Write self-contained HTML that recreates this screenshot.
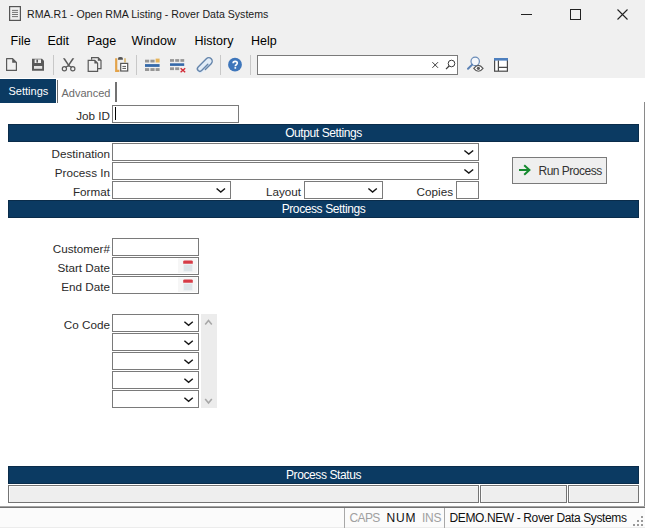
<!DOCTYPE html>
<html><head><meta charset="utf-8">
<style>
*{box-sizing:border-box;margin:0;padding:0}
html,body{width:645px;height:528px;overflow:hidden;background:#f0f0f0;font-family:"Liberation Sans",sans-serif;color:#000}
.a{position:absolute}
.t{position:absolute;white-space:nowrap;line-height:1}
#title{left:27px;top:9.2px;font-size:10.6px;color:#1a1a1a}
.menu{top:35px;font-size:12.5px;color:#000}
.sep{position:absolute;width:1px;background:#c8c8c8;top:55px;height:20px}
.hdr{position:absolute;left:8px;width:631px;height:18px;background:#0b3a62;border:1px solid #0a2c4a;color:#fff;font-size:12px;letter-spacing:-0.4px;text-align:center;line-height:16px}
.lbl{position:absolute;font-size:11.7px;color:#2a2a2a;text-align:right;line-height:1;white-space:nowrap}
.box{position:absolute;background:#fff;border:1px solid #7a7a7a;height:18px}
.chev{position:absolute;width:9px;height:5px}
</style></head><body>
<!-- title bar -->
<svg class="a" style="left:0;top:0" width="30" height="30">
<rect x="9.6" y="6.6" width="10.8" height="13.8" fill="none" stroke="#555" stroke-width="1.2"/>
<path d="M12 10.4h6M12 12.4h6M12 14.5h6M12 16.6h6" stroke="#666" stroke-width="0.9"/>
</svg>
<div class="t" id="title">RMA.R1 - Open RMA Listing - Rover Data Systems</div>
<svg class="a" style="left:521px;top:14px" width="11" height="1"><rect width="11" height="1" fill="#222"/></svg>
<svg class="a" style="left:570px;top:9px" width="11" height="11"><rect x="0.5" y="0.5" width="10" height="10" fill="none" stroke="#222"/></svg>
<svg class="a" style="left:617px;top:9px" width="11" height="11"><path d="M0.5 0.5L10.5 10.5M10.5 0.5L0.5 10.5" stroke="#222" stroke-width="1.1"/></svg>

<!-- menu -->
<div class="t menu" style="left:10.5px">File</div>
<div class="t menu" style="left:47.5px">Edit</div>
<div class="t menu" style="left:87px">Page</div>
<div class="t menu" style="left:131.5px">Window</div>
<div class="t menu" style="left:194.5px">History</div>
<div class="t menu" style="left:251px">Help</div>

<!-- toolbar -->
<svg class="a" style="left:0;top:52px" width="520" height="26" viewBox="0 52 520 26">
 <!-- new doc -->
 <path d="M6.6 58.6H12.6L16.4 62.4V70.4H6.6Z" fill="none" stroke="#5a5a5a" stroke-width="1.2" stroke-linejoin="round"/>
 <path d="M12.2 58.4L16.6 62.8H12.2Z" fill="#5a5a5a"/>
 <!-- save -->
 <path d="M32 58.8H42L44 60.8V70.8H32Z" fill="#5a5a5a"/>
 <rect x="34.6" y="59.4" width="6.4" height="3.6" fill="#f0f0f0"/>
 <rect x="36.4" y="59.6" width="1.6" height="3" fill="#5a5a5a"/>
 <rect x="34" y="66" width="8.2" height="2.8" fill="#e6e6e6"/>
 <!-- scissors -->
 <path d="M62.9 58.2L64.9 58.2L69.6 65.4L68.6 66.4Z" fill="#5a5a5a"/>
 <path d="M74.3 58.2L72.3 58.2L67.6 65.4L68.6 66.4Z" fill="#5a5a5a"/>
 <path d="M68.6 65.6L65.6 67.2M68.6 65.6L71.6 67.2" stroke="#5a5a5a" stroke-width="1.2"/>
 <circle cx="64.4" cy="68.8" r="2.1" fill="none" stroke="#5a5a5a" stroke-width="1.2"/>
 <circle cx="72.8" cy="68.8" r="2.1" fill="none" stroke="#5a5a5a" stroke-width="1.2"/>
 <!-- copy -->
 <path d="M91.6 59.8V57.6H98.2L101 60.4V68.6H98" fill="none" stroke="#5a5a5a" stroke-width="1.2"/>
 <path d="M97.8 57.2L101.4 60.8H97.8Z" fill="#5a5a5a"/>
 <path d="M88.2 60.4H94.8L97.6 63.2V71.4H88.2Z" fill="#f0f0f0" stroke="#5a5a5a" stroke-width="1.2"/>
 <path d="M94.4 60L98 63.6H94.4Z" fill="#5a5a5a"/>
 <!-- paste -->
 <path d="M116.2 58.2V70.8H119.4" fill="none" stroke="#e3a34a" stroke-width="2.2"/>
 <path d="M125 58.2V62.6" fill="none" stroke="#d9b56a" stroke-width="1.6"/>
 <path d="M118 59.8V58.4Q118 57 120.4 57Q122.9 57 122.9 58.4V59.8Z" fill="#555"/>
 <rect x="120.7" y="63.4" width="7" height="7.6" fill="#fff" stroke="#555" stroke-width="1.2"/>
 <path d="M122.4 66.4H126M122.4 68.4H126" stroke="#555" stroke-width="1"/>
 <!-- insert row -->
 <g fill="#959595">
  <rect x="145" y="59.7" width="4.2" height="2.8"/><rect x="150.4" y="59.7" width="4.2" height="2.8"/>
  <rect x="145" y="68.1" width="4.2" height="2.9"/><rect x="150.4" y="68.1" width="4.2" height="2.9"/><rect x="155.6" y="68.1" width="4" height="2.9"/>
 </g>
 <rect x="155.6" y="58.6" width="4" height="3.9" fill="#e5b35a"/>
 <rect x="145" y="64.1" width="14.6" height="2.8" fill="#3569a9"/>
 <!-- delete row -->
 <g fill="#959595">
  <rect x="170" y="59.1" width="4" height="2.7"/><rect x="175.2" y="59.1" width="4" height="2.7"/><rect x="180.4" y="59.1" width="3.8" height="2.7"/>
  <rect x="170" y="67.3" width="4" height="2.8"/><rect x="175.2" y="67.3" width="4" height="2.8"/>
 </g>
 <rect x="170" y="63.3" width="14.2" height="2.6" fill="#3569a9"/>
 <path d="M180.6 68.2L185.2 72.2M185.2 68.2L180.6 72.2" stroke="#d22a36" stroke-width="1.4"/>
 <!-- paperclip -->
 <g transform="translate(204.6,65.4) rotate(45) scale(0.95)"><path d="M-3.6 -6.2A3.6 3.6 0 0 1 3.6 -6.2V6.2A3.6 3.6 0 0 1 -3.6 6.2Z" fill="#e2ecf7"/><path d="M3.6 2.5V-6.2A3.6 3.6 0 0 0 -3.6 -6.2V6A2.6 2.6 0 0 0 1.6 6V-3.2" fill="none" stroke="#6585ab" stroke-width="1.5" stroke-linecap="round"/></g>
 <!-- help -->
 <circle cx="235" cy="64.7" r="6.9" fill="#3e76bb"/>
 <path d="M233.1 63.3Q233.1 61.4 235.2 61.4Q237.3 61.4 237.3 63.1Q237.3 64.1 236.3 64.7Q235.3 65.3 235.3 66.3" fill="none" stroke="#fff" stroke-width="1.6"/>
 <rect x="234.45" y="67.1" width="1.7" height="1.6" fill="#fff"/>
 <!-- search box -->
 <rect x="257.5" y="55.5" width="200" height="19" fill="#fff" stroke="#7a7a7a"/>
 <path d="M432.4 62.2L438 67.8M438 62.2L432.4 67.8" stroke="#3a3a3a" stroke-width="1"/>
 <circle cx="451.5" cy="63.5" r="3.3" fill="none" stroke="#3a3a3a" stroke-width="1"/>
 <path d="M449.1 66L446 69.1" stroke="#3a3a3a" stroke-width="1.2"/>
 <!-- find-eye -->
 <circle cx="475.2" cy="61.4" r="4.2" fill="#f4f7fb" stroke="#6a8cb8" stroke-width="1.2"/>
 <path d="M472.2 64.6L468 68.8" stroke="#5b82b5" stroke-width="2" stroke-linecap="round"/>
 <path d="M473.8 68.3Q478.4 62.4 483 68.3Q478.4 74.2 473.8 68.3Z" fill="#fff" stroke="#5a5a5a" stroke-width="1.2"/>
 <circle cx="478.4" cy="68.3" r="1.6" fill="#5a5a5a"/>
 <!-- layout -->
 <rect x="494.6" y="58.6" width="12.8" height="12.6" fill="#fff" stroke="#4a4a4a" stroke-width="1.2"/>
 <rect x="494" y="58" width="14" height="2.6" fill="#4d7fbe"/>
 <path d="M498.4 60.6V71M498.4 67.4H507.4" stroke="#4a4a4a" stroke-width="1.2"/>
</svg>
<div class="sep" style="left:53px"></div>
<div class="sep" style="left:136px"></div>
<div class="sep" style="left:220px"></div>
<div class="sep" style="left:250px"></div>

<!-- content background -->
<div class="a" style="left:0;top:78px;width:645px;height:428px;background:#fff"></div>
<div class="a" style="left:644px;top:102px;width:1px;height:404px;background:#8a8a8a"></div>
<div class="a" style="left:0;top:506px;width:645px;height:1px;background:#a4a4a4"></div><div class="a" style="left:0;top:507px;width:645px;height:1px;background:#707070"></div><div class="a" style="left:0;top:508px;width:645px;height:19px;background:#fbfbfb"></div><div class="a" style="left:0;top:527px;width:645px;height:1px;background:#ececec"></div>

<!-- tabs -->
<div class="a" style="left:0;top:79px;width:56px;height:24px;background:#0b3a62"></div>
<div class="a" style="left:57px;top:80px;width:1px;height:23px;background:#6a6a6a"></div>
<div class="t" style="left:8.5px;top:85.6px;font-size:11px;color:#fff">Settings</div>
<div class="a" style="left:115px;top:82px;width:2px;height:20px;background:#727272"></div>
<div class="t" style="left:61.5px;top:87.6px;font-size:11px;color:#6a6a6a">Advanced</div>

<!-- Job ID -->
<div class="lbl" style="left:60px;width:50px;top:109.8px">Job ID</div>
<div class="box" style="left:112px;top:105px;width:127px"></div>
<div class="a" style="left:115px;top:107px;width:1px;height:13px;background:#000"></div>

<div class="hdr" style="top:124px">Output Settings</div>

<div class="lbl" style="left:20px;width:90px;top:147.8px">Destination</div>
<div class="box" style="left:112px;top:143px;width:367px"></div>
<div class="lbl" style="left:20px;width:90px;top:166.8px">Process In</div>
<div class="box" style="left:112px;top:162px;width:367px"></div>
<div class="lbl" style="left:20px;width:90px;top:185.8px">Format</div>
<div class="box" style="left:112px;top:181px;width:119px"></div>
<div class="lbl" style="left:230px;width:71px;top:185.8px">Layout</div>
<div class="box" style="left:304px;top:181px;width:79px"></div>
<div class="lbl" style="left:381px;width:72px;top:185.8px">Copies</div>
<div class="box" style="left:456px;top:181px;width:23px"></div>



<!-- Run Process button -->
<div class="a" style="left:512px;top:157px;width:95px;height:27px;background:#efefef;border:1px solid #7a7a7a"></div>
<svg class="a" style="left:518px;top:164px" width="14" height="12" viewBox="0 0 14 12">
 <path d="M1 6H11.6M6.2 1.3L11.4 6L6.2 10.7" fill="none" stroke="#168a30" stroke-width="2"/>
</svg>
<div class="t" style="left:538.5px;top:165.2px;font-size:12px;letter-spacing:-0.5px;color:#333">Run Process</div>

<div class="hdr" style="top:200px">Process Settings</div>

<div class="lbl" style="left:20px;width:90px;top:242.8px">Customer#</div>
<div class="box" style="left:112px;top:238px;width:87px"></div>
<div class="lbl" style="left:20px;width:90px;top:261.8px">Start Date</div>
<div class="box" style="left:112px;top:257px;width:87px"></div>
<div class="lbl" style="left:20px;width:90px;top:280.8px">End Date</div>
<div class="box" style="left:112px;top:276px;width:87px"></div>
<svg class="a" style="left:178px;top:258px" width="20" height="36">
 <rect x="0" y="0.5" width="19" height="14.5" fill="#f6f6f6"/>
 <path d="M5.2 5.8V3.6Q5.2 2.4 6.6 2.4H13.4Q14.8 2.4 14.8 3.6V5.8Z" fill="#d63b46"/>
 <rect x="5.6" y="6.4" width="8.8" height="7" fill="#dde4e8" stroke="#eef1f3" stroke-width="0.8"/>
 <rect x="0" y="19.5" width="19" height="14.5" fill="#f6f6f6"/>
 <path d="M5.2 24.8V22.6Q5.2 21.4 6.6 21.4H13.4Q14.8 21.4 14.8 22.6V24.8Z" fill="#d63b46"/>
 <rect x="5.6" y="25.4" width="8.8" height="7" fill="#dde4e8" stroke="#eef1f3" stroke-width="0.8"/>
</svg>

<div class="lbl" style="left:20px;width:90px;top:318.8px">Co Code</div>
<div class="box" style="left:112px;top:314px;width:87px"></div>
<div class="box" style="left:112px;top:333px;width:87px"></div>
<div class="box" style="left:112px;top:352px;width:87px"></div>
<div class="box" style="left:112px;top:371px;width:87px"></div>
<div class="box" style="left:112px;top:390px;width:87px"></div>
<div class="a" style="left:201px;top:314px;width:16px;height:94px;background:#ececec"></div>
<svg class="a" style="left:201px;top:314px" width="16" height="94">
 <path d="M4.2 10.6L7.5 6.6L10.8 10.6" fill="none" stroke="#a8a8a8" stroke-width="1.6"/>
 <path d="M4.2 84.9L7.5 88.9L10.8 84.9" fill="none" stroke="#a8a8a8" stroke-width="1.6"/>
</svg>

<div class="hdr" style="top:466px">Process Status</div>
<div class="a" style="left:8px;top:485px;width:471px;height:18px;background:#eeeeee;border:1px solid #747474;box-shadow:inset 1px 1px #fafafa"></div>
<div class="a" style="left:480px;top:485px;width:87px;height:18px;background:#eeeeee;border:1px solid #747474;box-shadow:inset 1px 1px #fafafa"></div>
<div class="a" style="left:568px;top:485px;width:71px;height:18px;background:#eeeeee;border:1px solid #747474;box-shadow:inset 1px 1px #fafafa"></div>

<!-- status bar -->
<div class="a" style="left:344px;top:508px;width:1px;height:20px;background:#a8a8a8"></div>
<div class="a" style="left:444px;top:508px;width:1px;height:20px;background:#a8a8a8"></div>
<div class="t" style="left:349.5px;top:511.8px;font-size:12px;letter-spacing:-0.6px;color:#a0a0a0">CAPS</div>
<div class="t" style="left:386.5px;top:511.8px;font-size:12px;letter-spacing:0.8px;color:#111">NUM</div>
<div class="t" style="left:422px;top:511.8px;font-size:12px;letter-spacing:-0.3px;color:#a0a0a0">INS</div>
<div class="t" style="left:449.5px;top:511.8px;font-size:12px;letter-spacing:-0.38px;color:#111">DEMO.NEW - Rover Data Systems</div>
<svg class="a" style="left:632px;top:515px" width="12" height="12">
 <g fill="#9a9a9a">
  <rect x="9" y="1" width="2" height="2"/>
  <rect x="5" y="5" width="2" height="2"/><rect x="9" y="5" width="2" height="2"/>
  <rect x="1" y="9" width="2" height="2"/><rect x="5" y="9" width="2" height="2"/><rect x="9" y="9" width="2" height="2"/>
 </g>
</svg>
<svg class="a" style="left:0;top:0" width="645" height="528">
 <g fill="none" stroke="#151515" stroke-width="1.45">
  <path d="M464.4 150.5L468.8 154.0L473.2 150.5"/>
  <path d="M464.4 169.5L468.8 173.0L473.2 169.5"/>
  <path d="M216.6 188.5L220.8 192.0L225.0 188.5"/>
  <path d="M368.4 188.5L372.6 192.0L376.8 188.5"/>
  <path d="M184.4 321.7L188.6 325.2L192.8 321.7"/>
  <path d="M184.4 340.7L188.6 344.2L192.8 340.7"/>
  <path d="M184.4 359.7L188.6 363.2L192.8 359.7"/>
  <path d="M184.4 378.7L188.6 382.2L192.8 378.7"/>
  <path d="M184.4 397.7L188.6 401.2L192.8 397.7"/>
 </g>
</svg>
</body></html>
